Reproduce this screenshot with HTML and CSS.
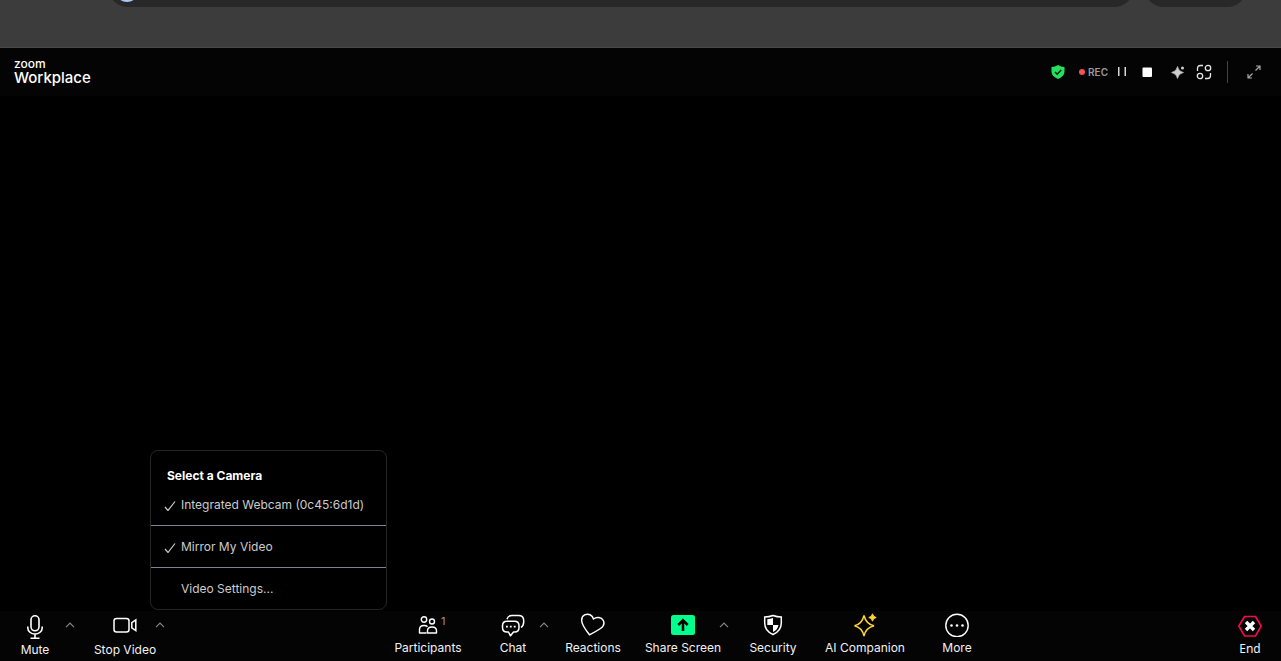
FILE: index.html
```html
<!DOCTYPE html>
<html lang="en">

<head>
    <meta charset="UTF-8">
    <meta name="viewport" content="width=device-width, initial-scale=1.0">
    <title>Zoom Workplace</title>
    <link rel="stylesheet" href="styles.css">
</head>

<body>
    <div class="browser">
        <div class="pill address"><span class="badge"></span></div>
        <div class="pill extra"></div>
    </div>

    <header class="topbar">
        <h1 class="logo"><small>zoom</small><br>Workplace</h1>
        <div class="status">
            <button class="tool shield" aria-label="Encrypted">
                <svg width="14" height="16" viewBox="0 0 14 16">
                    <path d="M7 1 Q10 3 13.500 3 V7.500 Q13.500 12 7 15 Q.5 12 .5 7.500 V3 Q4 3 7 1z" fill="#23e05f" />
                    <path d="M4 8l2.200 2.200L10.200 6" fill="none" stroke="#06210d" stroke-width="1.600" />
                </svg>
            </button>
            <span class="dot"></span>
            <span class="rec">REC</span>
            <button class="tool pause" aria-label="Pause recording">
                <svg width="10" height="10" viewBox="0 0 10 10" fill="#d8d8d8">
                    <path d="M1 0h1.500v9H1zM7.500 0H9v9H7.500z" />
                </svg>
            </button>
            <button class="tool stop" aria-label="Stop recording">
                <svg width="10" height="10" viewBox="0 0 10 10">
                    <rect x="0.500" y="0.500" width="9.500" height="9.500" rx="1" fill="#fff" />
                </svg>
            </button>
            <button class="tool sparkle" aria-label="AI Companion status">
                <svg width="14" height="14" viewBox="0 0 14 14" fill="#cfcfcf">
                    <path d="M6.500 1.500Q7.500 6.500 12.500 7.500Q7.500 8.500 6.500 13.500Q5.500 8.500 .5 7.500Q5.500 6.500 6.500 1.500z" stroke="#cfcfcf" stroke-width=".6" />
                    <circle cx="11.500" cy="3" r="1.500" />
                </svg>
            </button>
            <button class="tool apps" aria-label="Active apps">
                <svg width="16" height="16" viewBox="0 0 16 16" fill="none" stroke="#e6e6e6" stroke-width="1.300">
                    <path d="M1.500 7V4.500Q1.500 1.500 4.500 1.500H7M14.500 9v2.500q0 3-3 3H9" />
                    <circle cx="12" cy="4" r="2.700" />
                    <circle cx="4" cy="12" r="2.700" />
                </svg>
            </button>
            <span class="line"></span>
            <button class="tool expand" aria-label="Full screen">
                <svg width="14" height="14" viewBox="0 0 14 14" fill="none" stroke="#a8a8a8" stroke-width="1.200">
                    <path d="M8.500 5.500L13 1M9 1h4v4M5.500 8.500L1 13M1 9v4h4" />
                </svg>
            </button>
        </div>
    </header>

    <main class="stage"></main>

    <footer class="toolbar">
        <div class="group left">
            <div class="split">
                <button class="tile">
                    <svg width="24" height="24" viewBox="0 0 24 24" fill="none" stroke="#fff" stroke-width="1.600">
                        <rect x="8" y="0.800" width="8" height="15" rx="4" />
                        <path d="M4.800 11.500v1.500a7.200 6 0 0 0 14.400 0v-1.500M12 19v4M7.500 23.200h9" />
                    </svg>
                    <span>Mute</span>
                </button>
                <button class="caret" aria-label="Audio options">
                    <svg width="10" height="6" viewBox="0 0 10 6"><path d="M1 5.200l4-4 4 4" /></svg>
                </button>
            </div>
            <div class="split">
                <button class="tile">
                    <svg width="24" height="24" viewBox="0 0 24 24" fill="none" stroke="#fff" stroke-width="1.500">
                        <rect x="1" y="3.500" width="15" height="13.500" rx="2.500" />
                        <path d="M22.800 5v10.500l-4-2.700V7.700z" />
                    </svg>
                    <span>Stop Video</span>
                </button>
                <button class="caret" aria-label="Video options">
                    <svg width="10" height="6" viewBox="0 0 10 6"><path d="M1 5.200l4-4 4 4" /></svg>
                </button>
                <div class="menu">
                    <section>
                        <h2>Select a Camera</h2>
                        <button class="item">
                            <svg width="12" height="12" viewBox="0 0 12 12"><path d="M1 8l3 3.500 7-9" /></svg>
                            Integrated Webcam (0c45:6d1d)
                        </button>
                    </section>
                    <section>
                        <button class="item">
                            <svg width="12" height="12" viewBox="0 0 12 12"><path d="M1 8l3 3.500 7-9" /></svg>
                            Mirror My Video
                        </button>
                    </section>
                    <section>
                        <button class="item plain">Video Settings...</button>
                    </section>
                </div>
            </div>
        </div>

        <div class="group middle">
            <button class="tile participants">
                <span class="people">
                    <svg width="20" height="20" viewBox="0 0 20 20" fill="none" stroke="#fff" stroke-width="1.400">
                        <circle cx="6" cy="4.500" r="2.700" />
                        <circle cx="14" cy="6.500" r="2.500" />
                        <path d="M8.500 18H1.500v-3.500q0-4 4.500-4 2.500 0 3.500 1.200M9.500 18v-2.200q0-3.800 4.500-3.800t4.500 3.800V18z" stroke-linejoin="round" />
                    </svg>
                    <sup>1</sup>
                </span>
                <span>Participants</span>
            </button>
            <div class="split">
                <button class="tile chat">
                    <svg width="24" height="24" viewBox="0 0 24 24" fill="none" stroke="#fff" stroke-width="1.500" stroke-linejoin="round">
                        <path d="M6 6.200Q7 2.500 11 2.500h6.500q5.200 0 5.200 5v1.500q0 3.500-2.700 5.500" />
                        <path d="M6 8.200h7.500q4.500 0 4.500 4.500v1.800q0 4.500-4.500 4.500h-1L9.500 22.800 7.500 19H6q-4.500 0-4.500-4.500v-1.800Q1.500 8.200 6 8.200z" />
                        <path d="M5 13.700h1.800M8.900 13.700h1.800M12.800 13.700h1.800" stroke-width="1.800" />
                    </svg>
                    <span>Chat</span>
                </button>
                <button class="caret" aria-label="Chat options">
                    <svg width="10" height="6" viewBox="0 0 10 6"><path d="M1 5.200l4-4 4 4" /></svg>
                </button>
            </div>
            <button class="tile reactions">
                <svg width="24" height="24" viewBox="0 0 24 24" fill="none" stroke="#fff" stroke-width="1.500" stroke-linejoin="round">
                    <path d="M8.500 21.800Q1.500 13 .8 8.500 0 3.800 3.500 1.900C7.500 0 11.500 2 12.500 6c3-2.500 8-2 9.800 1.500 1.600 3.500.2 6-2.800 8Q14.500 18.800 8.500 21.800z" />
                </svg>
                <span>Reactions</span>
            </button>
            <div class="split">
                <button class="tile share">
                    <svg width="24" height="24" viewBox="0 0 24 24">
                        <rect y="2" width="24" height="20" rx="2.500" fill="#00ff8c" />
                        <path d="M12 18V8M7.300 12L12 7.300l4.700 4.700" fill="none" stroke="#000" stroke-width="2.500" />
                    </svg>
                    <span>Share Screen</span>
                </button>
                <button class="caret" aria-label="Share options">
                    <svg width="10" height="6" viewBox="0 0 10 6"><path d="M1 5.200l4-4 4 4" /></svg>
                </button>
            </div>
            <button class="tile security">
                <svg width="24" height="24" viewBox="0 0 24 24">
                    <path d="M12 2.500Q16 4 20.300 4v6q0 8-8.300 11.500Q3.700 18 3.700 10V4Q8 4 12 2.500z" fill="none" stroke="#fff" stroke-width="1.500" />
                    <path d="M12 5v7H6.300V6.200Q9.500 6 12 5zM12 12h5.500q-.8 4.800-5.500 7z" fill="#fff" />
                </svg>
                <span>Security</span>
            </button>
            <button class="tile ai">
                <svg width="24" height="24" viewBox="0 0 24 24">
                    <path d="M11 2.500Q13 11 21 12.800Q13 14.600 11 23Q9 14.600 1.500 12.800Q9 11 11 2.500z" fill="none" stroke="#ffd23e" stroke-width="1.500" />
                    <path d="M19.500 .8Q20 4 23.200 4.500Q20 5 19.500 8.200Q19 5 15.800 4.500Q19 4 19.500 .8z" fill="#ffd23e" stroke="#ffd23e" />
                </svg>
                <span>AI Companion</span>
            </button>
            <button class="tile more">
                <svg width="24" height="24" viewBox="0 0 24 24">
                    <circle cx="12" cy="12.500" r="11.200" fill="none" stroke="#fff" stroke-width="1.400" />
                    <circle cx="6.500" cy="12.500" r="1.300" fill="#fff" />
                    <circle cx="12" cy="12.500" r="1.300" fill="#fff" />
                    <circle cx="17.500" cy="12.500" r="1.300" fill="#fff" />
                </svg>
                <span>More</span>
            </button>
        </div>

        <div class="group right">
            <button class="tile end">
                <svg width="24" height="24" viewBox="0 0 24 24">
                    <path d="M6.500 2.500h11L23.200 12l-5.700 10h-11L.8 12z" fill="none" stroke="#f5084f" stroke-width="1.700" />
                    <path d="M8 8l8 8M16 8l-8 8" stroke="#fff" stroke-width="3.400" />
                </svg>
                <span>End</span>
            </button>
        </div>
    </footer>
</body>

</html>
```
FILE: styles.css
```css
* {
    box-sizing: border-box;
}

body {
    display: flex;
    flex-direction: column;
    height: 100vh;
    margin: 0;
    overflow: hidden;
    background-color: #000;
    color: #f2f2f2;
    font-family: Inter, "Liberation Sans", sans-serif;
    font-size: 12px;
    line-height: 16px;
}

button {
    padding: 0;
    border: none;
    background: none;
    color: inherit;
    font: inherit;
    cursor: pointer;
}

svg {
    display: block;
    flex-shrink: 0;
}

/* browser chrome */
.browser {
    display: flex;
    flex-shrink: 0;
    gap: 10px;
    height: 48px;
    padding: 0 34px 0 108px;
    overflow: hidden;
    background-color: #3c3c3c;
    border-bottom: 1px solid #484a48;
}

.pill {
    height: 40px;
    margin-top: -33px;
    border-radius: 20px;
    background-color: #282828;
}

.address {
    flex: 1;
    padding: 11px 7px;
}

.extra {
    width: 103px;
}

.badge {
    display: block;
    width: 24px;
    height: 24px;
    border-radius: 50%;
    background-color: #a8c7fa;
}

/* top bar */
.topbar {
    display: flex;
    flex-shrink: 0;
    align-items: center;
    justify-content: space-between;
    height: 48px;
    padding: 0 20px 0 14px;
    background-color: #040404;
}

.logo {
    margin: 0;
    padding-bottom: 4px;
    color: #fff;
    font-size: 15px;
    font-weight: 500;
    line-height: 14px;
}

.logo small {
    font-size: 12px;
}

.status {
    display: flex;
    align-items: center;
}

.dot {
    width: 6px;
    height: 6px;
    margin: 0 3px 0 14px;
    border-radius: 50%;
    background-color: #f65050;
}

.rec {
    color: #999;
    font-size: 10px;
    font-weight: 600;
}

.pause {
    margin-left: 9px;
}

.stop {
    margin-left: 15px;
}

.sparkle {
    margin-left: 19px;
}

.apps {
    margin-left: 11px;
}

.line {
    width: 1px;
    height: 22px;
    margin: 0 19px 0 15px;
    background-color: #444;
}

.stage {
    flex: 1;
}

/* bottom toolbar */
.toolbar {
    display: flex;
    flex-shrink: 0;
    justify-content: space-between;
    height: 50px;
    background-color: #040404;
}

.group {
    display: flex;
    align-items: flex-start;
    padding-top: 2px;
}

.left {
    gap: 15px;
    padding-top: 4px;
}

.right {
    padding: 3px 0 0 4px;
}

.split {
    display: flex;
    align-items: flex-start;
    position: relative;
}

.tile {
    display: flex;
    flex-direction: column;
    align-items: center;
    gap: 3px;
    width: 80px;
    white-space: nowrap;
}

.left .tile {
    width: 70px;
}

.participants {
    width: 90px;
}

.share {
    width: 100px;
}

.ai {
    width: 104px;
}

.right .tile {
    width: 62px;
    font-family: "Noto Sans", sans-serif;
}

.people {
    display: flex;
    align-items: center;
    height: 24px;
    padding-left: 16px;
}

.people sup {
    align-self: flex-start;
    width: 16px;
    padding-left: 3px;
    color: #999;
    font-size: 11px;
    line-height: 16px;
    text-align: left;
}

.caret {
    height: 24px;
    margin: 0 4px 0 -14px;
}

.left .caret {
    height: 20px;
    margin: 0 0 0 -5px;
}

.caret path {
    fill: none;
    stroke: #888;
    stroke-width: 1.2;
}

/* camera menu */
.menu {
    position: absolute;
    bottom: 48px;
    left: 60px;
    width: 237px;
    border: 1px solid #262626;
    border-radius: 8px;
    background-color: #000;
}

.menu section {
    padding: 13px 0 12px;
}

.menu section + section {
    border-top: 1px solid #85808f;
}

.menu h2 {
    margin: 4px 16px 13px;
    color: #fff;
    font-size: 12px;
    font-weight: 700;
}

.item {
    display: flex;
    align-items: center;
    gap: 5px;
    width: 100%;
    padding-left: 13px;
    color: #ccc;
    white-space: nowrap;
}

.item path {
    fill: none;
    stroke: #ccc;
    stroke-width: 1.2;
}

.plain {
    padding-left: 30px;
}
```
